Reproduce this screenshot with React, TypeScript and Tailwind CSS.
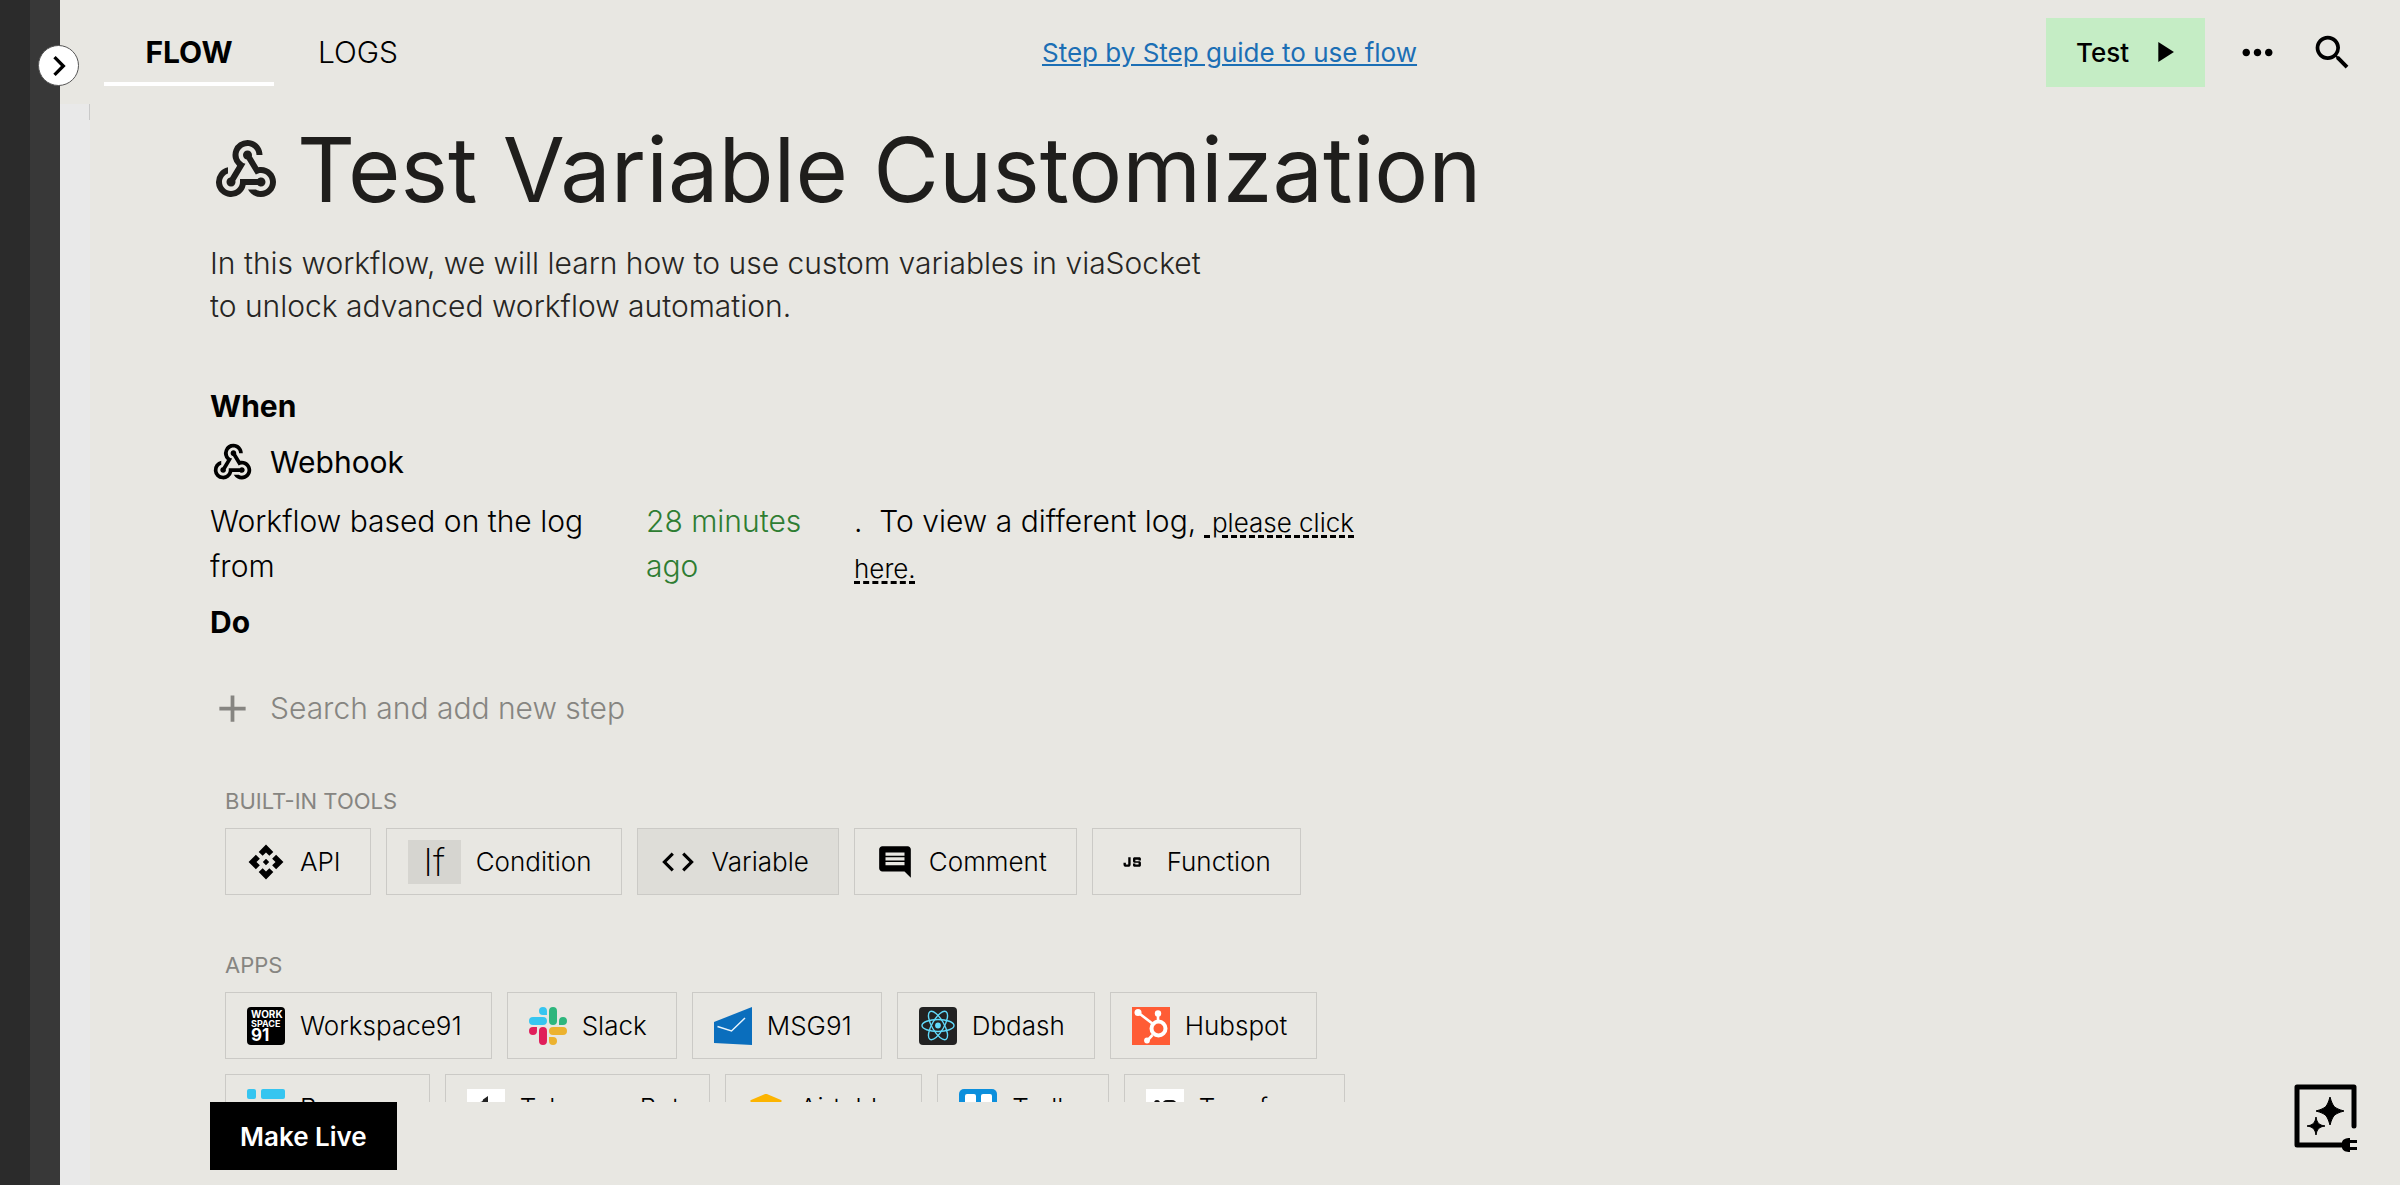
import type { ReactNode } from 'react'
import { clsx } from 'clsx'
import {
  MdAdd,
  MdApi,
  MdChevronRight,
  MdCode,
  MdComment,
  MdJavascript,
  MdMoreHoriz,
  MdPlayArrow,
  MdSearch,
  MdWebhook,
} from 'react-icons/md'

interface Chip {
  label: string
  icon: ReactNode
  active?: boolean
}

function WorkspaceLogo() {
  return (
    <span className="flex h-[38px] w-[38px] flex-col justify-center rounded bg-black pl-1 text-left text-white" aria-hidden="true">
      <span className="text-[10px] leading-[10px] font-bold">WORK</span>
      <span className="text-[9px] leading-[9px] font-bold">SPACE</span>
      <span className="text-[17px] leading-[15px] font-bold">91</span>
    </span>
  )
}

function SlackLogo() {
  return (
    <svg viewBox="0 0 122.8 122.8" className="h-[38px] w-[38px]" aria-hidden="true">
      <path fill="#e01e5a" d="M25.8 77.6a12.9 12.9 0 1 1-12.9-12.9h12.9zM32.3 77.6a12.9 12.9 0 0 1 25.8 0v32.3a12.9 12.9 0 0 1-25.8 0z" />
      <path fill="#36c5f0" d="M45.2 25.8a12.9 12.9 0 1 1 12.9-12.9v12.9zM45.2 32.3a12.9 12.9 0 0 1 0 25.8H12.9a12.9 12.9 0 0 1 0-25.8z" />
      <path fill="#2eb67d" d="M97 45.2a12.9 12.9 0 1 1 12.9 12.9H97zM90.5 45.2a12.9 12.9 0 0 1-25.8 0V12.9a12.9 12.9 0 0 1 25.8 0z" />
      <path fill="#ecb22e" d="M77.6 97a12.9 12.9 0 1 1-12.9 12.9V97zM77.6 90.5a12.9 12.9 0 0 1 0-25.8h32.3a12.9 12.9 0 0 1 0 25.8z" />
    </svg>
  )
}

function Msg91Logo() {
  return (
    <svg viewBox="0 0 38 38" className="h-[38px] w-[38px]" aria-hidden="true">
      <path fill="#0a6ebd" d="M0 15 38 0v38L0 36z" />
      <path d="M3.500 19.500 17.500 24 31 11" fill="none" stroke="#e8f4fc" strokeWidth="1.500" />
    </svg>
  )
}

function DbdashLogo() {
  return (
    <svg viewBox="0 0 38 38" className="h-[38px] w-[38px]" aria-hidden="true">
      <rect width="38" height="38" rx="4" fill="#222" />
      <g fill="none" stroke="#61dafb" strokeWidth="1.400">
        <ellipse cx="19" cy="18.500" rx="16" ry="6" />
        <ellipse cx="19" cy="18.500" rx="16" ry="6" transform="rotate(60 19 18.500)" />
        <ellipse cx="19" cy="18.500" rx="16" ry="6" transform="rotate(120 19 18.500)" />
      </g>
      <circle cx="19" cy="18.500" r="2.900" fill="#61dafb" />
    </svg>
  )
}

function HubspotLogo() {
  return (
    <svg viewBox="0 0 38 38" className="h-[38px] w-[38px]" aria-hidden="true">
      <rect width="38" height="38" fill="#ff5c35" />
      <g fill="none" stroke="#fff">
        <path d="M6 5.500 21 17M26 6v9M20.500 28 15 34" strokeWidth="2.600" />
        <circle cx="26.500" cy="21.500" r="7" strokeWidth="4" />
      </g>
      <g fill="#fff">
        <circle cx="6" cy="5.500" r="3.500" />
        <circle cx="26" cy="6.500" r="3.200" />
        <circle cx="15" cy="33.500" r="2.900" />
      </g>
    </svg>
  )
}

function BrowserLogo() {
  return (
    <svg viewBox="0 0 38 38" className="h-[38px] w-[38px]" fill="#36c5f0" aria-hidden="true">
      <rect width="9" height="10" rx="2" />
      <rect x="14" width="24" height="10" rx="2" />
      <rect y="14" width="24" height="10" rx="2" />
      <rect x="29" y="14" width="9" height="10" rx="2" />
      <rect y="28" width="9" height="10" rx="2" />
      <rect x="14" y="28" width="24" height="10" rx="2" />
    </svg>
  )
}

function TelegramLogo() {
  return (
    <svg viewBox="0 0 38 38" className="h-[38px] w-[38px]" aria-hidden="true">
      <rect width="38" height="38" fill="#fff" />
      <path fill="#222" d="M16 10.500 21 7v6h4v4h-4v9c0 2 2 3 4 2v4c-5 2-9 0-9-5V17h-3v-4c2 0 3-1 3-2.500z" />
    </svg>
  )
}

function AirtableLogo() {
  return (
    <svg viewBox="0 0 38 38" className="h-[38px] w-[38px]" aria-hidden="true">
      <path fill="#fcb400" d="M17 5.500 4 11c-1 .5-1 1.500 0 2l13 5c1.500.5 2.500.5 4 0l13-5c1-.5 1-1.500 0-2L21 5.500c-1.500-.6-2.500-.6-4 0z" />
      <path fill="#18bfff" d="M21 20.500v13l14-5.500V15z" />
      <path fill="#f82b60" d="M17 21 3 15v13z" />
    </svg>
  )
}

function TrelloLogo() {
  return (
    <svg viewBox="0 0 38 38" className="h-[38px] w-[38px]" aria-hidden="true">
      <rect width="38" height="38" rx="5" fill="#0c8fdc" />
      <rect x="6" y="5" width="11" height="27" rx="2" fill="#fff" />
      <rect x="22" y="5" width="11" height="16" rx="2" fill="#fff" />
    </svg>
  )
}

function TypeformLogo() {
  return (
    <svg viewBox="0 0 38 38" className="h-[38px] w-[38px]" aria-hidden="true">
      <rect width="38" height="38" fill="#fff" />
      <rect x="8" y="11" width="6" height="15" rx="3" fill="#111" />
      <rect x="16" y="11" width="15" height="15" rx="5" fill="#111" />
    </svg>
  )
}

function AssistantIcon() {
  return (
    <svg viewBox="0 0 64 68" className="h-[68px] w-16" aria-hidden="true">
      <path d="M50 61H3V3h57v39" fill="none" stroke="#000" strokeWidth="5" strokeLinecap="round" strokeLinejoin="round" />
      <path d="M36 13c3 10 4 11 14 14-10 3-11 4-14 14-3-10-4-11-14-14 10-3 11-4 14-14zM22 33c1 6 3 8 9 9-6 1-8 3-9 9-1-6-3-8-9-9 6-1 8-3 9-9z" stroke="#000" strokeLinejoin="round" />
      <path d="M48 58c1-3 4-4 8-4v14c-4 0-7-1-8-4zM56 56h7v3h-7zM56 63h7v3h-7z" />
    </svg>
  )
}

const TOOLS: Chip[] = [
  { label: 'API', icon: <MdApi className="h-[38px] w-[38px]" /> },
  {
    label: 'Condition',
    icon: (
      <span className="flex h-11 w-[53px] items-center justify-center bg-[#d6d5d0] text-[38px] leading-none font-extralight">
        If
      </span>
    ),
  },
  { label: 'Variable', icon: <MdCode className="h-[38px] w-[38px]" />, active: true },
  { label: 'Comment', icon: <MdComment className="h-[38px] w-[38px]" /> },
  { label: 'Function', icon: <MdJavascript className="h-[38px] w-[38px]" /> },
]

const APPS: Chip[] = [
  { label: 'Workspace91', icon: <WorkspaceLogo /> },
  { label: 'Slack', icon: <SlackLogo /> },
  { label: 'MSG91', icon: <Msg91Logo /> },
  { label: 'Dbdash', icon: <DbdashLogo /> },
  { label: 'Hubspot', icon: <HubspotLogo /> },
  { label: 'Browser', icon: <BrowserLogo /> },
  { label: 'Telegram Bot', icon: <TelegramLogo /> },
  { label: 'Airtable', icon: <AirtableLogo /> },
  { label: 'Trello', icon: <TrelloLogo /> },
  { label: 'Typeform', icon: <TypeformLogo /> },
]

function ChipList({ title, chips }: { title: string; chips: Chip[] }) {
  return (
    <section className="pl-[15px]">
      <h3 className="mb-[9px] text-[22px] leading-9 text-[#868581]">{title}</h3>
      <div className="flex flex-wrap gap-[15px]">
        {chips.map((chip) => (
          <button
            key={chip.label}
            type="button"
            className={clsx(
              'flex h-[67px] items-center gap-[15px] border border-[#cbcac6] pr-[29px] pl-[21px] text-[26px] font-light text-black',
              chip.active && 'bg-[#deddd8]',
            )}
          >
            {chip.icon}
            {chip.label}
          </button>
        ))}
      </div>
    </section>
  )
}

function Header() {
  return (
    <header className="flex h-[104px] shrink-0 items-center justify-between pr-[45px] pl-[44px]">
      <nav className="flex flex-1 text-[30px] leading-[45px]">
        <button type="button" className="h-[68px] w-[170px] border-y-4 border-t-transparent border-b-white font-bold">
          FLOW
        </button>
        <button type="button" className="h-[68px] w-[168px] border-y-4 border-transparent font-light">
          LOGS
        </button>
      </nav>
      <a href="#guide" className="text-[26px] text-[#1c6fb5] underline">
        Step by Step guide to use flow
      </a>
      <div className="flex flex-1 items-center justify-end gap-[30px]">
        <button type="button" className="flex h-[69px] items-center gap-[18px] bg-[#c5edc5] pr-6 pl-[30px] text-[26px] font-medium">
          Test
          <MdPlayArrow className="h-[34px] w-[34px]" stroke="currentColor" strokeLinejoin="round" aria-hidden="true" />
        </button>
        <button type="button" aria-label="More options">
          <MdMoreHoriz className="h-[45px] w-[45px]" />
        </button>
        <button type="button" aria-label="Search">
          <MdSearch className="h-[45px] w-[45px]" />
        </button>
      </div>
    </header>
  )
}

export default function App() {
  return (
    <div className="relative flex h-screen overflow-hidden bg-[#e8e7e2] font-['Inter',sans-serif] text-black">
      <aside className="w-[30px] shrink-0 bg-[#2b2b2b]" />
      <aside className="w-[30px] shrink-0 bg-[#383838]" />
      <button
        type="button"
        aria-label="Expand sidebar"
        className="absolute top-[45px] left-[38px] flex h-[41px] w-[41px] items-center justify-center rounded-full border border-[#555] bg-white"
      >
        <MdChevronRight className="h-10 w-10 shrink-0" stroke="currentColor" />
      </button>

      <div className="flex min-w-0 flex-1 flex-col">
        <Header />
        <div className="flex min-h-0 flex-1">
          <div className="w-[30px] shrink-0 bg-[#e9e9e9]">
            <div className="h-4 border-r border-[#c9c9c9]" />
          </div>
          <div className="flex min-w-0 flex-1 flex-col pl-[120px]">
            <main className="min-h-0 flex-1 overflow-hidden pt-3 text-[30px] leading-[45px]">
              <div className="flex items-center gap-[15px] text-[#1f1e1c]">
                <MdWebhook className="h-[72px] w-[72px] shrink-0" aria-hidden="true" />
                <h1 className="text-[90px] leading-[108px]">Test Variable Customization</h1>
              </div>
              <p className="mt-[18px] max-w-[1020px] leading-[43px] font-light text-[#262523]">
                In this workflow, we will learn how to use custom variables in viaSocket to unlock advanced workflow
                automation.
              </p>

              <div className="max-w-[1170px]">
                <h2 className="mt-14 font-bold">When</h2>
                <div className="mt-[11px] flex items-center gap-[15px]">
                  <MdWebhook className="h-[45px] w-[45px]" aria-hidden="true" />
                  Webhook
                </div>
                <div className="mt-[14px] flex font-light">
                  <p className="w-[436px] shrink-0 pr-10">Workflow based on the log from</p>
                  <p className="w-[208px] shrink-0 pr-10 text-[#2e7d32]">28 minutes ago</p>
                  <p>
                    .&nbsp; To view a different log,{' '}
                    <a href="#log" className="text-[26px] underline decoration-dashed decoration-[3px] underline-offset-[3px]">
                      &nbsp;please click here.
                    </a>
                  </p>
                </div>
                <h2 className="mt-[9px] font-bold">Do</h2>

                <label className="mt-[41px] flex items-center gap-[15px] text-[#868581]">
                  <MdAdd className="h-[45px] w-[45px]" aria-hidden="true" />
                  <input
                    type="text"
                    aria-label="Search and add new step"
                    placeholder="Search and add new step"
                    className="min-w-0 flex-1 bg-transparent font-light outline-none placeholder:text-[#868581]"
                  />
                </label>

                <div className="mt-[52px] flex flex-col gap-[52px]">
                  <ChipList title="BUILT-IN TOOLS" chips={TOOLS} />
                  <ChipList title="APPS" chips={APPS} />
                </div>
              </div>
            </main>
            <footer className="flex h-[83px] shrink-0 items-start">
              <button type="button" className="h-[68px] bg-black px-[30px] text-[26px] font-semibold text-white">
                Make Live
              </button>
            </footer>
          </div>
        </div>
      </div>

      <button type="button" aria-label="Open assistant" className="absolute right-[42px] bottom-[33px]">
        <AssistantIcon />
      </button>
    </div>
  )
}
